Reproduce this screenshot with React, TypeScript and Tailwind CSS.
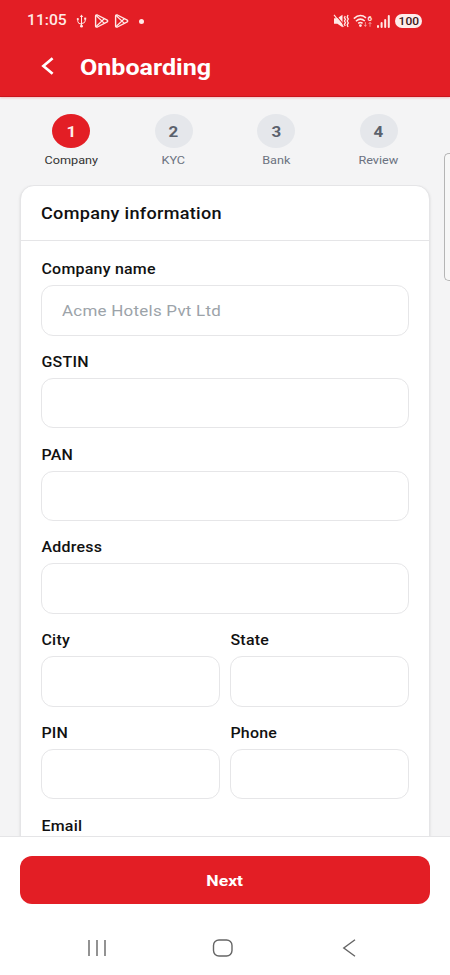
import React from 'react';

const steps = [
    { number: 1, label: 'Company' },
    { number: 2, label: 'KYC' },
    { number: 3, label: 'Bank' },
    { number: 4, label: 'Review' },
];

const PlayIcon: React.FC = () => (
    <svg width="16" height="14" viewBox="0 0 16 14" fill="none" stroke="currentColor" strokeWidth="1.4" strokeLinejoin="round" strokeLinecap="round">
        <path d="M1.6 2Q1.6.6 3.4 1L12.8 5.8Q14.6 7 12.8 8.2L3.4 13Q1.6 13.4 1.6 12Z" />
        <path d="M2.4 1.8 10.4 9.4M2.4 12.2 10.4 4.6" strokeWidth="1.3" />
    </svg>
);

const StatusBar: React.FC = () => (
    <div className="flex h-[42px] items-center pl-[27px] pr-[28px] text-[#ffe9e6]">
        <span className="w-[40px] whitespace-nowrap pt-px text-[14.5px] font-medium leading-none">
            <span className="inline-block origin-left scale-x-[1.08]">11:05</span>
        </span>
        <svg className="ml-[9px]" width="11" height="14" viewBox="0 0 11 14" fill="none" stroke="currentColor" strokeWidth="1">
            <path d="M5.5 2v10M5.5 10.2Q1.8 9.8 1.8 7.4V5M5.5 9.6Q9.2 9.2 9.2 7V4.5" />
            <path d="M5.5.4 7.2 3H3.8Z" fill="currentColor" stroke="none" />
            <circle cx="5.5" cy="12.2" r="1.4" fill="currentColor" stroke="none" />
            <circle cx="1.8" cy="5" r="1.1" fill="currentColor" stroke="none" />
            <path d="M8.2 3.6h2v2h-2z" fill="currentColor" stroke="none" />
        </svg>
        <div className="ml-[7px] flex gap-[4px]">
            <PlayIcon />
            <PlayIcon />
        </div>
        <div className="ml-[9px] h-[5px] w-[5px] rounded-full bg-[#ffe9e6]" />

        <div className="ml-auto flex items-center">
            <svg width="17" height="14" viewBox="0 0 17 14" fill="currentColor">
                <path d="M1 4.2h3.4L9.5.8v12.4L4.4 9.8H1z" />
                <path d="M2.2.2 11 11" stroke="#e31e25" strokeWidth="1.1" />
                <path d="M1 .8 10.4 12.8" stroke="currentColor" strokeWidth="1.1" />
                <path d="m12.2 2-.8 1.7 1.1 1.6L11.4 7l1.1 1.7-1.1 1.6.8 1.7M15 1l-.8 2.1 1.1 2L14.2 7l1.1 1.9-1.1 2 .8 2.1" fill="none" stroke="currentColor" strokeWidth="1.3" />
            </svg>
            <svg className="ml-[3px] overflow-visible" width="20" height="14" viewBox="0 0 20 14" fill="none" stroke="currentColor" strokeWidth="1.5">
                <path d="M.8 4.6Q7 -1 13 3.8M2.9 7.2Q7.4 3.2 11.8 7M5.2 9.4Q7.4 7.6 9.6 9.4" />
                <circle cx="7.4" cy="11.6" r="1.4" fill="currentColor" stroke="none" />
                <path d="M12.4 8v4.4m-1.4-1.6 1.4 1.6 1.2-1.6M17 12.8V8.4m-1.4 1.6L17 8.4l1.4 1.6" strokeWidth=".8" opacity=".65" />
                <text x="14.6" y="7" fill="currentColor" stroke="none" fontSize="8" fontWeight="700">6</text>
            </svg>
            <svg className="ml-[3px]" width="15" height="13" viewBox="0 0 15 13" fill="currentColor">
                <rect x="1" y="10" width="2" height="3" rx="1" />
                <rect x="4.6" y="7" width="2" height="6" rx="1" />
                <rect x="8.2" y="4" width="2" height="9" rx="1" />
                <rect x="11.8" y="0" width="2" height="13" rx="1" />
            </svg>
            <span className="ml-[4px] flex h-[14px] w-[27px] items-center justify-center rounded-full bg-[#ffeceb] pt-px text-[11.5px] font-medium leading-none text-[#3d1719]">
                <span className="inline-block scale-x-[1.04]">100</span>
            </span>
        </div>
    </div>
);

interface FieldProps {
    label: string;
    placeholder?: string;
}

const Field: React.FC<FieldProps> = ({ label, placeholder }) => (
    <div className="min-w-0">
        <label className="block h-5 text-[14px] font-medium leading-5 text-[#111]">
            <span className="inline-block origin-left scale-x-[1.14] whitespace-nowrap pl-[0.4px] tracking-[0.2px]">{label}</span>
        </label>
        <div className="mt-[6px] flex h-[50.5px] items-center rounded-[12px] border border-[#e6e6e8] pl-5 pt-[2px] text-[15px] text-[#9ca3a9]">
            <span className="inline-block origin-left scale-x-[1.13] whitespace-nowrap tracking-[0.22px]">{placeholder}</span>
        </div>
    </div>
);

const App: React.FC = () => {
    return (
        <div className="relative flex h-[975px] w-[450px] flex-col overflow-hidden bg-[#f4f4f5] font-['Roboto',sans-serif]">
            {/* Header */}
            <header className="h-[97px] shrink-0 border-b border-[#c9141c] bg-[#e31e25] shadow-[0_1px_2px_rgba(227,30,37,0.25)]">
                <StatusBar />
                <div className="flex h-[50px] items-center pl-[41px] text-white">
                    <svg className="-mt-[2px]" width="13" height="18" viewBox="0 0 13 18" fill="none" stroke="currentColor" strokeWidth="2.7">
                        <path d="M11.6 1.2 2.4 9l9.2 7.8" />
                    </svg>
                    <h1 className="ml-[26px] pt-[2px] text-[22px] font-bold leading-none">
                        <span className="inline-block origin-left scale-x-[1.14]">Onboarding</span>
                    </h1>
                </div>
            </header>

            {/* Steps */}
            <div className="grid h-[88px] shrink-0 grid-cols-4 px-5 pt-[17px]">
                {steps.map((step) => (
                    <div key={step.number} className="flex flex-col items-center">
                        <div className={`flex h-[34px] w-[38px] items-center justify-center rounded-[50%] pt-[2px] text-[15px] font-bold ${step.number === 1 ? 'bg-[#e31e25] text-[#ffeceb]' : 'bg-[#e5e7eb] text-[#5b616c]'}`}>
                            <span className="inline-block scale-x-[1.13]">{step.number}</span>
                        </div>
                        <span className={`mt-[5px] inline-block scale-x-[1.15] text-[11px] leading-4 ${step.number === 1 ? 'text-[#333]' : 'text-[#6b7280]'}`}>
                            {step.label}
                        </span>
                    </div>
                ))}
            </div>

            {/* Form */}
            <main className="min-h-0 flex-1 overflow-hidden px-5">
                <div className="h-[720px] rounded-[14px] border border-[#e5e5e7] bg-white shadow-sm">
                    <h2 className="flex h-[55px] items-center border-b border-[#e5e5e7] pl-5 pt-[2px] text-[16px] font-medium text-[#111]">
                        <span className="inline-block origin-left scale-x-[1.13] tracking-[0.26px]">Company information</span>
                    </h2>
                    <div className="flex flex-col gap-[16.25px] px-5 pt-[18px]">
                        <Field label="Company name" placeholder="Acme Hotels Pvt Ltd" />
                        <Field label="GSTIN" />
                        <Field label="PAN" />
                        <Field label="Address" />
                        <div className="grid grid-cols-2 gap-x-[10px] gap-y-[16.25px]">
                            <Field label="City" />
                            <Field label="State" />
                            <Field label="PIN" />
                            <Field label="Phone" />
                        </div>
                        <Field label="Email" />
                    </div>
                </div>
            </main>

            {/* Footer */}
            <footer className="h-[139px] shrink-0 border-t border-[#e5e5e7] bg-white px-5 pt-[18.5px]">
                <button className="flex h-[48.5px] w-full items-center justify-center rounded-[12px] bg-[#e31e25] pt-[2px] text-[15px] font-bold text-white">
                    <span className="inline-block scale-x-[1.17]">Next</span>
                </button>
                <nav className="mt-[35px] flex items-center pl-[67px] text-[#656565]">
                    <svg width="20" height="18" viewBox="0 0 20 18" fill="none" stroke="currentColor" strokeWidth="1.4">
                        <path d="M2 1v16M10 1v16M18 1v16" />
                    </svg>
                    <svg className="ml-[105px]" width="22" height="18" viewBox="0 0 22 18" fill="none" stroke="currentColor" strokeWidth="1.4">
                        <rect x="1.5" y="1" width="18.5" height="16" rx="5.5" />
                    </svg>
                    <svg className="ml-[108px]" width="14" height="18" viewBox="0 0 14 18" fill="none" stroke="currentColor" strokeWidth="1.4">
                        <path d="M13 .8 1.8 9 13 17.2" />
                    </svg>
                </nav>
            </footer>

            {/* Edge panel handle */}
            <div className="absolute right-0 top-[153px] h-[128px] w-[6px] rounded-l-[5px] border border-r-0 border-[#b5b5b5] bg-[#f7f7f7]" />
        </div>
    );
};

export default App;
